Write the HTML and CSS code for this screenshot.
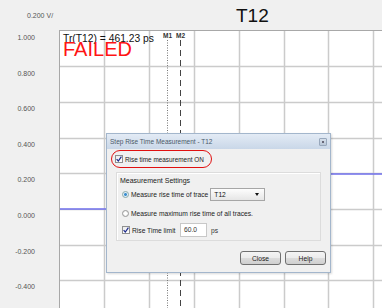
FILE: index.html
```html
<!DOCTYPE html>
<html>
<head>
<meta charset="utf-8">
<link rel="stylesheet" href="styles.css">
</head>
<body>
<div class="app">
  <header class="top">
    <span class="scale">0.200 V/</span>
    <h1 class="title">T12</h1>
  </header>
  <div class="main">
    <div class="axis">
      <div class="tick">1.000</div>
      <div class="tick">0.800</div>
      <div class="tick">0.600</div>
      <div class="tick">0.400</div>
      <div class="tick">0.200</div>
      <div class="tick">0.000</div>
      <div class="tick">-0.200</div>
      <div class="tick">-0.400</div>
    </div>
    <div class="plot">
      <svg class="grid" width="322" height="277" viewBox="0 0 322 277">
        <g stroke="#cbcbcb" stroke-width="1.5">
          <line x1="44.5" y1="0" x2="44.5" y2="277"/>
          <line x1="89.5" y1="0" x2="89.5" y2="277"/>
          <line x1="134.5" y1="0" x2="134.5" y2="277"/>
          <line x1="179.5" y1="0" x2="179.5" y2="277"/>
          <line x1="224.5" y1="0" x2="224.5" y2="277"/>
          <line x1="268.5" y1="0" x2="268.5" y2="277"/>
          <line x1="313.5" y1="0" x2="313.5" y2="277"/>
          <line x1="0" y1="35.5" x2="322" y2="35.5"/>
          <line x1="0" y1="71.5" x2="322" y2="71.5"/>
          <line x1="0" y1="107.5" x2="322" y2="107.5"/>
          <line x1="0" y1="142.5" x2="322" y2="142.5"/>
          <line x1="0" y1="178.5" x2="322" y2="178.5"/>
          <line x1="0" y1="214.5" x2="322" y2="214.5"/>
          <line x1="0" y1="249.5" x2="322" y2="249.5"/>
        </g>
        <g stroke="#7070ee" stroke-width="1.5">
          <line x1="0" y1="178" x2="60" y2="178"/>
          <line x1="60" y1="178" x2="60" y2="143"/>
          <line x1="60" y1="143" x2="322" y2="143"/>
        </g>
        <line x1="107.5" y1="9" x2="107.5" y2="277" stroke="#777" stroke-width="1" stroke-dasharray="1 1.5"/>
        <line x1="120.5" y1="9" x2="120.5" y2="277" stroke="#444" stroke-width="1" stroke-dasharray="6 4"/>
        <text x="103" y="7" class="mk">M1</text>
        <text x="116" y="7" class="mk">M2</text>
      </svg>
      <div class="readout">Tr(T12) = 461.23 ps</div>
      <div class="failed">FAILED</div>

      <div class="dialog">
        <div class="dlg-title">
          <span>Step Rise Time Measurement - T12</span>
          <span class="dlg-close"></span>
        </div>
        <div class="dlg-body">
          <label class="row highlight">
            <span class="check"><svg width="6" height="6" viewBox="0 0 6 6"><path d="M0.6 3.2 L2.3 5 L5.4 0.6" fill="none" stroke="#1c2a8c" stroke-width="1.2"/></svg></span>
            <span>Rise time measurement ON</span>
          </label>
          <div class="panel">
            <div class="panel-label">Measurement Settings</div>
            <div class="row r1">
              <span class="radio on"></span>
              <span>Measure rise time of trace</span>
              <span class="combo"><span>T12</span><span class="arrow"></span></span>
            </div>
            <div class="row r2">
              <span class="radio"></span>
              <span>Measure maximum rise time of all traces.</span>
            </div>
            <div class="row r3">
              <span class="check"><svg width="6" height="6" viewBox="0 0 6 6"><path d="M0.6 3.2 L2.3 5 L5.4 0.6" fill="none" stroke="#1c2a8c" stroke-width="1.2"/></svg></span>
              <span class="lim">Rise Time limit</span>
              <span class="input">60.0</span>
              <span class="unit">ps</span>
            </div>
          </div>
          <div class="buttons">
            <span class="btn">Close</span>
            <span class="btn">Help</span>
          </div>
        </div>
      </div>
    </div>
  </div>
</div>
</body>
</html>
```
FILE: styles.css
```css
* { box-sizing: border-box; }
html, body { margin: 0; padding: 0; }
body {
  width: 382px;
  height: 308px;
  overflow: hidden;
  background: #f0f0f0;
  font-family: "Liberation Sans", Arial, sans-serif;
}
.app { width: 382px; height: 308px; display: flex; flex-direction: column; }
.top {
  height: 30px;
  flex-shrink: 0;
  display: flex;
  align-items: center;
  padding-left: 27px;
}
.scale { font-size: 7px; color: #555; width: 26px; white-space: nowrap; margin-top: 1px; }
.title {
  margin: 1px 0 0 183px;
  font-size: 19px;
  font-weight: normal;
  color: #111;
  line-height: 1;
}
.main { flex: 1; min-height: 0; display: flex; overflow: hidden; }
.axis {
  width: 59px;
  flex-shrink: 0;
  padding-top: 3px;
  padding-right: 24px;
  display: flex;
  flex-direction: column;
  align-items: flex-end;
}
.tick {
  height: 35.6px;
  flex-shrink: 0;
  line-height: 10px;
  font-size: 7px;
  color: #555;
}
.plot {
  flex: 1;
  position: relative;
  background: #fff;
  border-left: 1px solid #a8a8a8;
  border-top: 1px solid #a8a8a8;
}
.grid { display: block; position: absolute; left: 0; top: 0; }
.mk { font-size: 6.5px; font-family: "Liberation Sans", Arial, sans-serif; font-weight: bold; fill: #333; }
.readout {
  position: absolute;
  left: 3px;
  top: 2px;
  font-size: 10.3px;
  color: #111;
  line-height: 12px;
}
.failed {
  position: absolute;
  left: 3px;
  top: 6px;
  font-size: 20px;
  color: #ff1414;
  line-height: 24px;
}
.dialog {
  position: absolute;
  left: 46px;
  top: 102px;
  width: 225px;
  height: 140px;
  border: 1px solid #a3b6cc;
  background: #f0f0f0;
  font-size: 6.7px;
  color: #222;
  box-shadow: 1px 1px 2px rgba(0,0,0,0.15);
}
.dlg-title {
  height: 15px;
  display: flex;
  align-items: center;
  justify-content: space-between;
  padding: 0 3px 0 3px;
  background: linear-gradient(#e3ebf5, #c9d7e8);
  color: #4a5868;
  font-size: 6.5px;
}
.dlg-close {
  width: 8px;
  height: 8px;
  border: 1px solid #98a8bc;
  border-radius: 1px;
  background: linear-gradient(#d6dfea, #b9c7d8);
  position: relative;
}
.dlg-close::after {
  content: "";
  position: absolute;
  left: 2px; top: 2px;
  width: 2px; height: 2px;
  background: #667;
}
.dlg-body { padding: 1px 9px 7px 4px; display: flex; flex-direction: column; }
.row { display: flex; align-items: center; white-space: nowrap; }
.highlight {
  width: 101px;
  height: 18px;
  border: 1.5px solid #e01010;
  border-radius: 9px;
  padding-left: 3px;
  font-size: 6.4px;
}
.check {
  width: 8px;
  height: 8px;
  border: 1px solid #8e8f8f;
  background: linear-gradient(#ececec, #fff);
  display: inline-flex;
  align-items: center;
  justify-content: center;
  margin-right: 2px;
  flex-shrink: 0;
}
.check svg { display: block; }
.panel {
  margin-top: 4px;
  margin-left: 5px;
  height: 69px;
  border: 1px solid #dcdcdc;
  box-shadow: inset 1px 1px 0 #fff;
  padding: 3px 0 0 3px;
}
.panel-label { line-height: 10px; color: #222; font-size: 7px; }
.r1 { margin-top: 2px; height: 13px; padding-left: 2px; }
.r2 { margin-top: 7px; height: 10px; padding-left: 2px; }
.r3 { margin-top: 5px; height: 14px; padding-left: 2px; }
.radio {
  width: 7px;
  height: 7px;
  border-radius: 50%;
  border: 1px solid #999;
  background: radial-gradient(circle, #fff 30%, #ddd 100%);
  margin-right: 2px;
  flex-shrink: 0;
}
.radio.on { background: radial-gradient(circle, #3d8fd0 0 35%, #d9e6f2 45%, #fff 100%); border-color: #8aa; }
.combo {
  margin-left: 2px;
  width: 55px;
  height: 13px;
  border: 1px solid #a6a6a6;
  background: linear-gradient(#fdfdfd, #e6e6e6);
  display: flex;
  align-items: center;
  justify-content: space-between;
  padding: 0 5px 0 3px;
  color: #111;
}
.arrow {
  width: 0; height: 0;
  border-left: 2.5px solid transparent;
  border-right: 2.5px solid transparent;
  border-top: 3px solid #111;
}
.lim { width: 48px; }
.input {
  width: 27px;
  height: 14px;
  border: 1px solid #c8c8c8;
  background: #fff;
  padding-left: 3px;
  line-height: 12px;
  color: #333;
}
.unit { margin-left: 4px; color: #333; }
.buttons { margin-top: 10px; display: flex; justify-content: flex-end; gap: 4px; margin-right: -5px; }
.btn {
  width: 41px;
  height: 14px;
  border: 1px solid #707070;
  border-radius: 3px;
  background: linear-gradient(#f4f4f4 0%, #ebebeb 50%, #dcdcdc 51%, #cfcfcf 100%);
  display: flex;
  align-items: center;
  justify-content: center;
  color: #222;
}
```
